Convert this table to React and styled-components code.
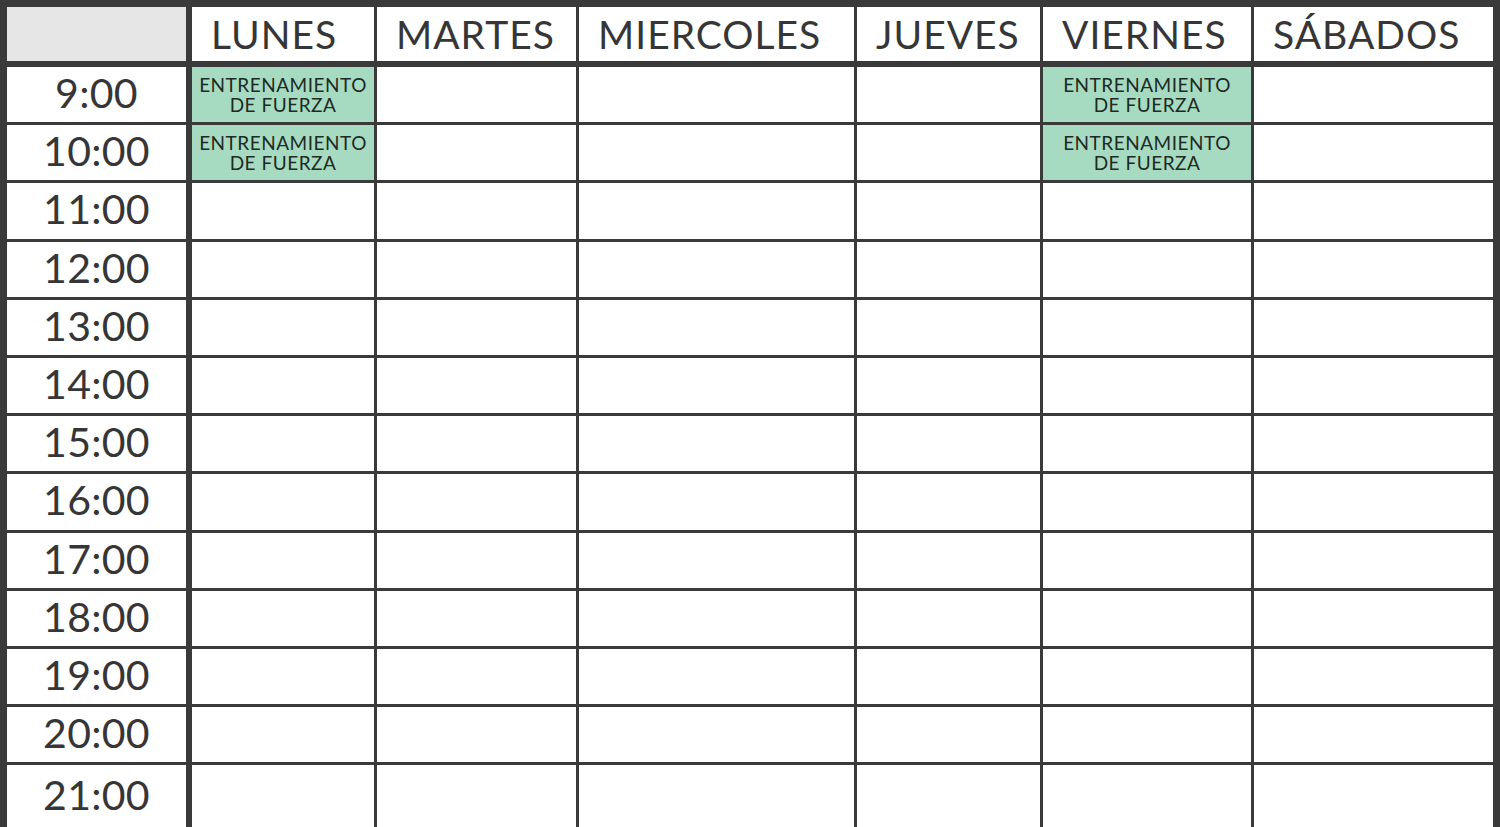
import React from 'react';
import styled, {createGlobalStyle} from 'styled-components';

const LINE = '#3a3a3a';
const INK = '#363636';

const DAYS = ['LUNES', 'MARTES', 'MIERCOLES', 'JUEVES', 'VIERNES', 'SÁBADOS'];
const HOURS = [9, 10, 11, 12, 13, 14, 15, 16, 17, 18, 19, 20, 21];

const STRENGTH = ['ENTRENAMIENTO', 'DE FUERZA'];

// sessions keyed by "hour-dayIndex"
const SESSIONS = {
  '9-0': STRENGTH,
  '10-0': STRENGTH,
  '9-4': STRENGTH,
  '10-4': STRENGTH
};

const GlobalStyle = createGlobalStyle`
  html, body {
    margin: 0;
    padding: 0;
    background: #fff;
  }
  body {
    font-family: Lato, 'Open Sans', sans-serif;
    color: ${INK};
  }
`;

const Timetable = styled.div`
  display: grid;
  grid-template-columns: 182px 182px 199px 275px 183px 208px 239px;
  grid-template-rows: 57px repeat(12, 55.2px) 1fr;
  gap: 3px;
  height: 820px;
  padding: 7px 7px 0 7px;
  background: ${LINE};
`;

const Corner = styled.div`
  background: #e6e6e6;
  border-right: 3px solid ${LINE};
  border-bottom: 3px solid ${LINE};
`;

const DayHeader = styled.div`
  display: flex;
  align-items: center;
  padding-left: 19px;
  background: #fff;
  border-bottom: 3px solid ${LINE};
  font-size: 39px;
  letter-spacing: 1px;
  line-height: 1;
`;

const TimeCell = styled.div`
  display: flex;
  align-items: center;
  justify-content: center;
  padding-bottom: 4px;
  background: #fff;
  border-right: 3px solid ${LINE};
  font-size: 41px;
  letter-spacing: 0.3px;
  line-height: 1;
`;

const SlotCell = styled.div`
  display: flex;
  flex-direction: column;
  align-items: center;
  justify-content: center;
  background: ${props => (props.$filled ? '#a6dbc2' : '#fff')};
  font-size: 19px;
  line-height: 20px;
  letter-spacing: 0.5px;
  color: #1f2a24;
`;

export default function App() {
  return (
    <>
      <GlobalStyle />
      <Timetable>
        <Corner />
        {DAYS.map(day => (
          <DayHeader key={day}>{day}</DayHeader>
        ))}
        {HOURS.map(hour => (
          <React.Fragment key={hour}>
            <TimeCell>{hour}:00</TimeCell>
            {DAYS.map((day, i) => {
              const session = SESSIONS[`${hour}-${i}`];
              return (
                <SlotCell key={day} $filled={!!session}>
                  {session && session.map(line => <span key={line}>{line}</span>)}
                </SlotCell>
              );
            })}
          </React.Fragment>
        ))}
      </Timetable>
    </>
  );
}
